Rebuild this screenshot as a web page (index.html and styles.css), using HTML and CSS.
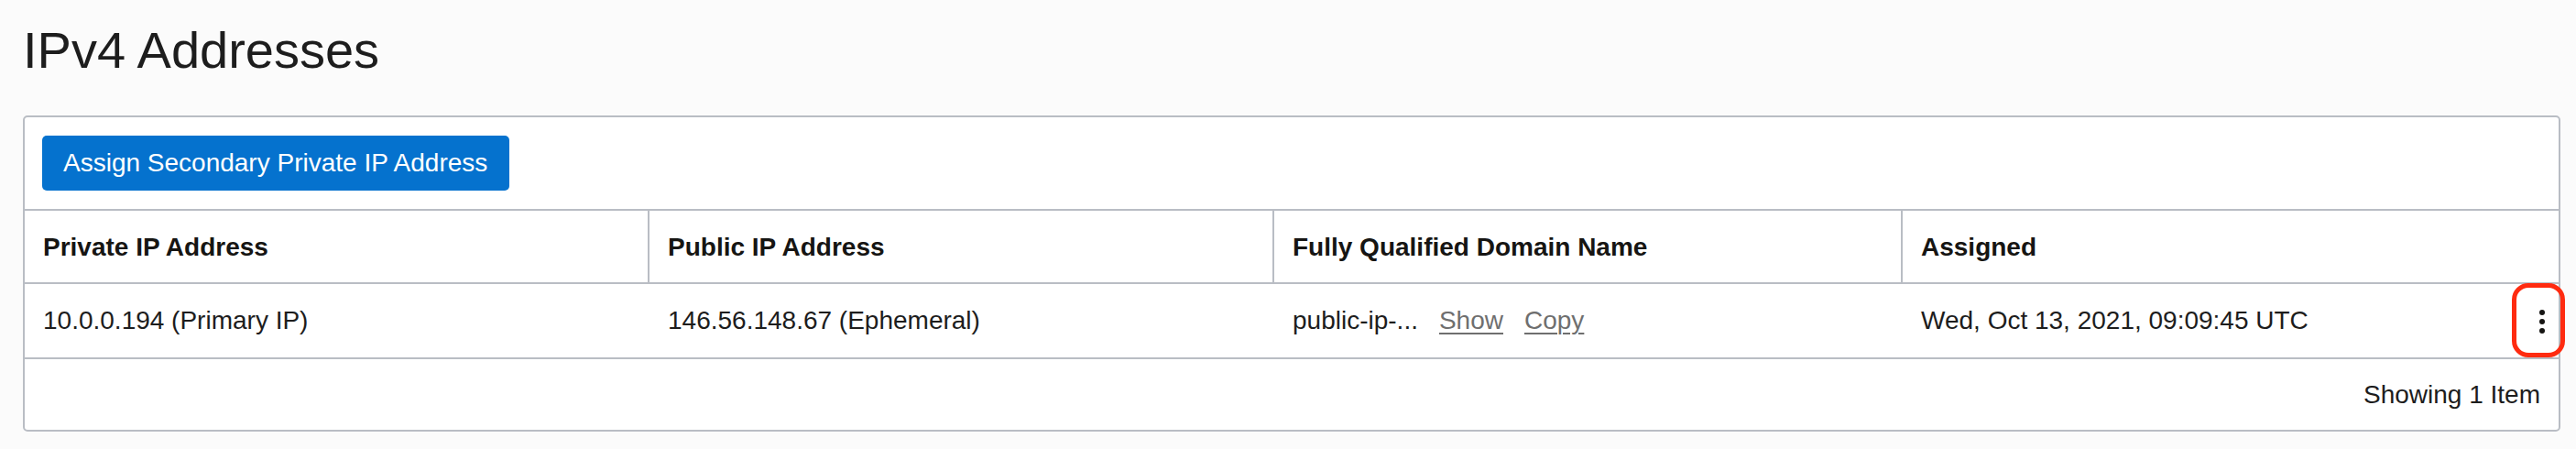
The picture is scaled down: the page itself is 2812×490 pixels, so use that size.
FILE: index.html
```html
<!DOCTYPE html>
<html lang="en">
<head>
<meta charset="utf-8">
<title>IPv4 Addresses</title>
<link rel="stylesheet" href="styles.css">
</head>
<body>
<main class="page">
  <h1 class="title">IPv4 Addresses</h1>
  <section class="panel">
    <div class="toolbar">
      <button class="btn-primary" type="button">Assign Secondary Private IP Address</button>
    </div>
    <div class="grid" role="table">
      <div class="row head" role="row">
        <div class="hcell" role="columnheader">Private IP Address</div>
        <div class="hcell" role="columnheader">Public IP Address</div>
        <div class="hcell" role="columnheader">Fully Qualified Domain Name</div>
        <div class="hcell" role="columnheader">Assigned</div>
      </div>
      <div class="row body" role="row">
        <div class="cell" role="cell">10.0.0.194 (Primary IP)</div>
        <div class="cell" role="cell">146.56.148.67 (Ephemeral)</div>
        <div class="cell" role="cell"><span>public-ip-...</span><a class="link" href="#">Show</a><a class="link" href="#">Copy</a></div>
        <div class="cell last" role="cell">
          <span>Wed, Oct 13, 2021, 09:09:45 UTC</span>
          <button class="kebab" type="button" aria-label="Actions">
            <svg width="6" height="26" viewBox="0 0 6 26"><circle cx="3" cy="3" r="3"/><circle cx="3" cy="13" r="3"/><circle cx="3" cy="23" r="3"/></svg>
          </button>
          <span class="annot"></span>
        </div>
      </div>
    </div>
    <div class="footer">Showing 1 Item</div>
  </section>
</main>
</body>
</html>
```
FILE: styles.css
```css
html, body {
  margin: 0;
  padding: 0;
  background: #fbfbfb;
}
body {
  font-family: "Liberation Sans", Arial, sans-serif;
  color: #161513;
}
.page {
  padding: 22px 17px 0 25px;
}
.title {
  margin: 0 0 38px 0;
  font-size: 56px;
  line-height: 66px;
  font-weight: 400;
  color: #1d1d1d;
}
.panel {
  background: #fff;
  border: 2px solid #b9bdc4;
  border-radius: 5px;
}
.toolbar {
  padding: 20px 19px;
  border-bottom: 2px solid #b9bdc4;
  display: flex;
}
.btn-primary {
  height: 60px;
  padding: 0 24px 0 23px;
  background: #0572ce;
  color: #fff;
  border: none;
  border-radius: 5px;
  font-family: "Liberation Sans", Arial, sans-serif;
  font-size: 28px;
  line-height: 60px;
}
.row {
  display: grid;
  grid-template-columns: 680px 682px 686px 1fr;
  border-bottom: 2px solid #b9bdc4;
}
.hcell {
  height: 78px;
  box-sizing: border-box;
  padding: 2px 20px 0;
  display: flex;
  align-items: center;
  font-size: 28px;
  font-weight: 700;
  color: #161513;
}
.hcell + .hcell {
  border-left: 2px solid #b9bdc4;
}
.cell {
  height: 80px;
  box-sizing: border-box;
  padding: 0 20px;
  display: flex;
  align-items: center;
  font-size: 28px;
  color: #1d1d1d;
}
.cell + .cell {
  padding-left: 22px;
}
.link {
  margin-left: 23px;
  color: #6f6f6f;
  text-decoration: underline;
  text-decoration-thickness: 2px;
  text-underline-offset: 4px;
}
.last {
  position: relative;
  justify-content: space-between;
  padding-right: 0;
}
.kebab {
  width: 36px;
  height: 50px;
  padding: 0;
  border: none;
  background: transparent;
  display: flex;
  align-items: center;
  justify-content: center;
  margin-top: 2px;
}
.kebab svg {
  fill: #161513;
}
.annot {
  position: absolute;
  right: -7px;
  top: -1px;
  width: 58px;
  height: 81px;
  box-sizing: border-box;
  border: 5px solid #ff2b10;
  border-radius: 18px;
}
.footer {
  height: 77px;
  padding: 0 20px;
  display: flex;
  align-items: center;
  justify-content: flex-end;
  font-size: 28px;
  color: #1d1d1d;
}
```
